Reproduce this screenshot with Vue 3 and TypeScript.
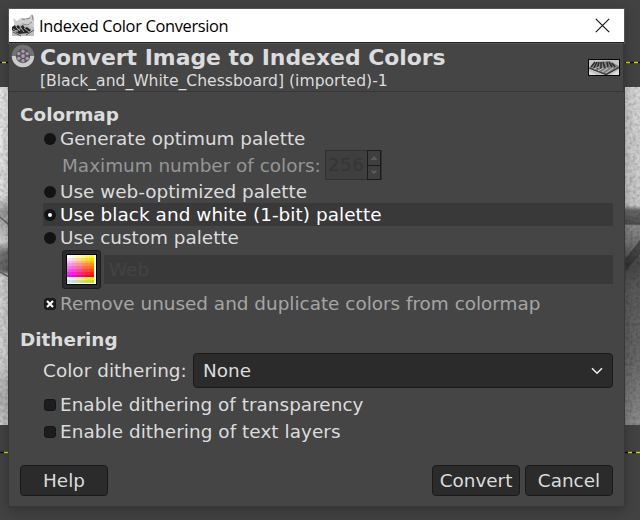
<script setup lang="ts">
import { ref } from 'vue'

type Mode = 'optimum' | 'web' | 'mono' | 'custom'

const mode = ref<Mode>('mono')
const removeUnused = ref(true)
const ditherAlpha = ref(false)
const ditherText = ref(false)

// Web palette swatches: white-to-yellow, magenta-to-red, then the pale green tail.
const paletteColors: string[] = []
for (let row = 0; row < 10; row++) {
  for (let col = 0; col < 6; col++) {
    const blue = 255 - col * 51
    if (row < 8) paletteColors.push(`rgb(255,${Math.round((7 - row) * 36.4)},${blue})`)
    else paletteColors.push(`rgb(204,${row === 8 ? 255 : 225},${blue})`)
  }
}
</script>

<template>
  <div class="desktop">
    <svg class="canvas" width="640" height="520" viewBox="0 0 640 520">
      <defs>
        <linearGradient id="photoLeft" x1="0" y1="0" x2="0" y2="1">
          <stop offset="0" stop-color="#f0f0f0" />
          <stop offset=".32" stop-color="#e6e6e6" />
          <stop offset=".35" stop-color="#bcbcbc" />
          <stop offset=".37" stop-color="#a0a0a0" />
          <stop offset=".41" stop-color="#b8b8b8" />
          <stop offset=".46" stop-color="#d6d6d6" />
          <stop offset=".49" stop-color="#777" />
          <stop offset=".54" stop-color="#666" />
          <stop offset=".56" stop-color="#d4d4d4" />
          <stop offset=".8" stop-color="#dadada" />
          <stop offset=".92" stop-color="#b8b8b8" />
          <stop offset="1" stop-color="#cecece" />
        </linearGradient>
        <linearGradient id="photoRight" x1="0" y1="0" x2="0" y2="1">
          <stop offset="0" stop-color="#d8d8d8" />
          <stop offset=".35" stop-color="#cacaca" />
          <stop offset=".365" stop-color="#6a6a6a" />
          <stop offset=".405" stop-color="#505050" />
          <stop offset=".41" stop-color="#8c8c8c" />
          <stop offset=".46" stop-color="#777" />
          <stop offset=".52" stop-color="#484848" />
          <stop offset=".6" stop-color="#5c5c5c" />
          <stop offset=".8" stop-color="#686868" />
          <stop offset="1" stop-color="#8c8c8c" />
        </linearGradient>
        <filter id="grain" x="0" y="0" width="1" height="1">
          <feTurbulence type="fractalNoise" baseFrequency=".3" numOctaves="2" seed="4" />
          <feColorMatrix values="0 0 0 0 0  0 0 0 0 0  0 0 0 0 0  1.2 0 0 0 -.45" />
        </filter>
      </defs>
      <rect y="87" width="12" height="338" fill="url(#photoLeft)" />
      <rect x="620" y="87" width="20" height="338" fill="url(#photoRight)" />
      <path d="M0 217l9 8M0 272l9 5" stroke="#555" stroke-width="1.5" opacity=".8" />
      <path d="M620 266l20-26v14l-20 24z" fill="#303030" opacity=".6" />
      <rect y="87" width="640" height="338" filter="url(#grain)" opacity=".35" />
      <path d="M0 62.5h640M0 452.5h640" stroke="#111" stroke-width="1.4" />
      <path d="M2 62.5h640M4 452.5h640" stroke="#d8d800" stroke-width="1.4" stroke-dasharray="4 4" />
    </svg>

    <section class="dialog">
      <header class="titlebar">
        <svg class="app-icon" width="23" height="23" viewBox="0 0 23 23">
          <path d="M1 4l4 3 4-3h7l4-4 2 3v9l-2 8H6L3 14z" fill="#cdcdcd" />
          <path d="M10 5l3 1M14 5l4-1M10 10l6 1 4-3M20 1l1 5" stroke="#888" fill="none" />
          <path d="M0 13l8-3 14 3v9H0z" fill="#bdbdbd" />
          <path d="M0 13l3-2 1 2 2-2 2 2 3-2 2 3 2-1 4 3-3 3-9 1-7-4z" fill="#272727" />
          <path d="M1 15l5 3M4 13l4 4M8 13l4 5M12 14l5 4M2 18l8-4" stroke="#c4c4c4" stroke-width=".8" />
          <path d="M1 18l8 4M14 21l8-5" stroke="#555" />
        </svg>
        <span class="title">Indexed Color Conversion</span>
        <svg class="close" width="15" height="15" viewBox="0 0 15 15">
          <path d="M.8.8l13.4 13.4M14.2.8L.8 14.2" stroke="#111" stroke-width="1.15" />
        </svg>
      </header>

      <div class="banner">
        <svg class="wheel" width="24" height="24" viewBox="0 0 24 24">
          <circle cx="12" cy="12" r="11.2" fill="#727272" />
          <path d="M.8 12a11.2 11.2 0 0 0 22.4 0z" fill="#cbcbcb" />
          <circle cx="12" cy="12" r="7.2" fill="#5c5560" />
          <g fill="#a99dad">
            <circle cx="12" cy="12" r="1.9" /><circle cx="12" cy="7.2" r="1.7" /><circle cx="12" cy="16.8" r="1.7" />
            <circle cx="7.8" cy="9.6" r="1.7" /><circle cx="16.2" cy="9.6" r="1.7" />
            <circle cx="7.8" cy="14.4" r="1.7" /><circle cx="16.2" cy="14.4" r="1.7" />
          </g>
        </svg>
        <div class="heading">
          <h1>Convert Image to Indexed Colors</h1>
          <p>[Black_and_White_Chessboard] (imported)-1</p>
        </div>
        <svg class="thumb" width="32" height="17" viewBox="0 0 32 17">
          <rect x=".5" y=".5" width="31" height="16" fill="#c4c4c4" />
          <path d="M1 9l7-6 13-1 10 5v2l-12 7z" fill="#828282" />
          <path d="M1 9l17 6.5 13-7" fill="none" stroke="#333" stroke-width="1.3" />
          <path d="M3 8l4-5M6 9l3-6M9 10l2-7M13 10V3M17 9l-2-6M20 8l-1-5M24 8l-3-5M27 8l-3-4" stroke="#2c2c2c" stroke-width="1.5" />
          <path d="M6 10l5-2M10 12l5-3M14 13l6-4M18 14l7-5" stroke="#d0d0d0" stroke-width=".8" />
          <path d="M1 12l8 4H1zM31 11l-8 5h8z" fill="#ddd" />
          <rect x=".5" y=".5" width="31" height="16" fill="none" stroke="#050505" />
        </svg>
      </div>

      <main class="content">
        <h2>Colormap</h2>
        <div class="group">
          <label class="row first" @click="mode = 'optimum'"><i class="radio" :class="{ on: mode === 'optimum' }" /><span>Generate optimum palette</span></label>
          <div class="row max">
            <span>Maximum number of colors:</span>
            <div class="spin">
              <span class="value">256</span>
              <div class="steps">
                <svg width="12" height="14" viewBox="0 0 12 14"><path d="M2.5 9L6 5l3.500 4z" fill="#5c5c5c" /></svg>
                <svg width="12" height="14" viewBox="0 0 12 14"><path d="M2.500 5L6 9l3.500-4z" fill="#5c5c5c" /></svg>
              </div>
            </div>
          </div>
          <label class="row" @click="mode = 'web'"><i class="radio" :class="{ on: mode === 'web' }" /><span>Use web-optimized palette</span></label>
          <label class="row hover" @click="mode = 'mono'"><i class="radio" :class="{ on: mode === 'mono' }" /><span>Use black and white (1-bit) palette</span></label>
          <label class="row" @click="mode = 'custom'"><i class="radio" :class="{ on: mode === 'custom' }" /><span>Use custom palette</span></label>
          <div class="custom">
            <button class="palette-button">
              <span class="palette"><i v-for="(c, i) in paletteColors" :key="i" :style="{ background: c }" /></span>
            </button>
            <div class="entry">Web</div>
          </div>
          <label class="row dim" @click="removeUnused = !removeUnused">
            <i class="check"><svg v-if="removeUnused" width="12" height="12" viewBox="0 0 12 12"><path d="M3 3l6 6M9 3L3 9" stroke="#fff" stroke-width="2" /></svg></i>
            <span>Remove unused and duplicate colors from colormap</span>
          </label>
        </div>

        <h2 class="second">Dithering</h2>
        <div class="group">
          <div class="combo-row">
            <span class="combo-label">Color dithering:</span>
            <button class="combo">
              <span>None</span>
              <svg width="12" height="8" viewBox="0 0 12 8"><path d="M1 1.2l5 5 5-5" fill="none" stroke="#eee" stroke-width="1.6" /></svg>
            </button>
          </div>
          <label class="row alpha" @click="ditherAlpha = !ditherAlpha">
            <i class="check"><svg v-if="ditherAlpha" width="12" height="12" viewBox="0 0 12 12"><path d="M3 3l6 6M9 3L3 9" stroke="#fff" stroke-width="2" /></svg></i>
            <span>Enable dithering of transparency</span>
          </label>
          <label class="row layers" @click="ditherText = !ditherText">
            <i class="check"><svg v-if="ditherText" width="12" height="12" viewBox="0 0 12 12"><path d="M3 3l6 6M9 3L3 9" stroke="#fff" stroke-width="2" /></svg></i>
            <span>Enable dithering of text layers</span>
          </label>
        </div>
      </main>

      <footer class="actions">
        <button class="btn help">Help</button>
        <button class="btn">Convert</button>
        <button class="btn">Cancel</button>
      </footer>
    </section>
  </div>
</template>

<style>
body { margin: 0; overflow: hidden; }
</style>

<style scoped>
* { box-sizing: border-box; }
.desktop {
  position: relative; width: 640px; height: 520px; padding: 9px 0 0 9px; overflow: hidden;
  background: #424242; color: #dcdcdc; font: 18.4px "DejaVu Sans", sans-serif;
}
.canvas { position: absolute; inset: 0; }
.dialog {
  position: relative; width: 615px; height: 497px; background: #454545;
  box-shadow: 0 0 0 1px #383838, 0 3px 12px rgba(0, 0, 0, .3); white-space: nowrap;
}
.titlebar {
  display: flex; align-items: center; height: 34px; padding: 0 14px 0 3px;
  background: #fff; border-bottom: 1px solid #222; color: #000;
  box-shadow: 0 0 0 1px #555;
}
.app-icon { flex: none; }
.title { flex: 1; margin-left: 4px; font: 16.4px/32px "Open Sans", sans-serif; letter-spacing: -.33px; padding-top: 1px; }
.close { flex: none; }
.banner { display: flex; height: 49px; border-bottom: 1px solid #373737; border-right: 1px solid #373737; padding: 0 3px 0 2px; }
.wheel { flex: none; margin-top: 1px; }
.heading { flex: 1; margin-left: 5px; }
h1 { margin: 1px 0 0; font-size: 21.9px; line-height: 28px; font-weight: bold; }
p { margin: 0; font-size: 15.6px; line-height: 19px; }
.thumb { flex: none; margin-top: 16px; }
.content { padding: 12px 11px 0; }
h2 { margin: 0; font-size: 18.4px; line-height: 22px; font-weight: bold; }
.group { padding-left: 23px; }
.row { display: flex; align-items: center; height: 23px; padding-left: 1px; line-height: 23px; }
.row.first { margin-top: 1px; }
.row.max { height: 30px; padding: 0 0 0 19px; color: #969696; }
.hover { background: #393939; color: #fff; letter-spacing: .07px; }
.dim { color: #a5a5a5; margin-top: 3px; }
.radio, .check { flex: none; display: flex; width: 12px; height: 12px; margin-right: 4px; background: #131313; border-radius: 50%; }
.radio.on::after { content: ""; width: 4px; height: 4px; margin: 4px; background: #fff; border-radius: 50%; }
.check { border-radius: 3px; background: #1d1d1d; border: 1px solid #151515; }
.check svg { margin: -1px; }
.spin { display: flex; width: 57px; height: 30px; margin-left: 4px; border: 1px solid #303030; background: #3f3f3f; color: #353535; }
.value { width: 42px; padding-left: 2px; line-height: 28px; letter-spacing: .6px; }
.steps { width: 14px; margin: -1px; display: grid; grid-template-rows: 14px 14px; border: 1px solid #1c1c1c; }
.steps svg + svg { border-top: 1px solid #1c1c1c; }
.custom { display: flex; align-items: center; gap: 3px; height: 39px; margin-top: 1px; padding-left: 19px; }
.palette-button { width: 39px; height: 39px; padding: 3px; border: 1px solid #1e1e1e; border-radius: 3px; background: #2b2b2b; }
.palette { display: grid; grid-template-columns: repeat(6, 1fr); width: 31px; height: 31px; border: 1px solid #000; padding: 0 2px 1px 0; background: #fff; }
.entry { flex: 1; height: 29px; padding-left: 5px; background: #393939; color: #444; line-height: 29px; }
.second { margin-top: 14px; }
.combo-row { display: flex; height: 35px; margin-top: 2px; line-height: 35px; }
.combo-label { width: 150px; letter-spacing: .05px; }
button { font: inherit; color: #dcdcdc; }
.combo { flex: 1; display: flex; align-items: center; justify-content: space-between; padding: 0 9px; border: 1px solid #1a1a1a; border-radius: 4px; background: #2b2b2b; }
.alpha { margin-top: 5px; letter-spacing: .04px; }
.layers { margin-top: 4px; letter-spacing: .06px; }
.actions { display: flex; gap: 5px; padding: 22px 11px 0; }
.btn { width: 88px; height: 31px; padding: 1px 0 0; border: 1px solid #1a1a1a; border-radius: 4px; background: #2b2b2b; line-height: 28px; }
.help { margin-right: auto; }
</style>
